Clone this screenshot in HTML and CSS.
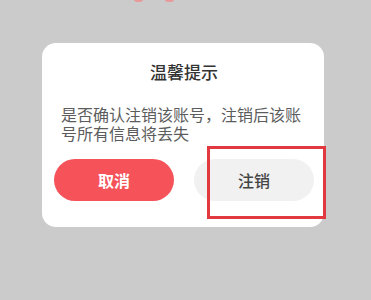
FILE: index.html
```html
<!DOCTYPE html>
<html lang="zh">
<head>
<meta charset="utf-8">
<link rel="stylesheet" href="styles.css">
</head>
<body>
<div class="screen">
  <div class="top-marks"><span class="mark"></span><span class="mark"></span></div>
  <div class="dialog">
    <div class="title">温馨提示</div>
    <div class="message">是否确认注销该账号，注销后该账号所有信息将丢失</div>
    <div class="actions">
      <div class="btn btn-cancel">取消</div>
      <div class="btn btn-confirm">注销</div>
    </div>
  </div>
  <div class="highlight"></div>
</div>
</body>
</html>
```
FILE: styles.css
```css
html, body {
  margin: 0;
  padding: 0;
  background: #cbcbcb;
}
.screen {
  position: relative;
  width: 371px;
  height: 300px;
  overflow: hidden;
  font-family: "Noto Sans CJK SC", "Noto Sans", sans-serif;
}
.top-marks {
  position: absolute;
  left: 134px;
  top: -3px;
  display: flex;
  gap: 22px;
}
.mark {
  width: 9px;
  height: 5px;
  border-radius: 50%;
  background: #f08c8c;
  opacity: 0.8;
}
.dialog {
  position: absolute;
  left: 42px;
  top: 43px;
  width: 282px;
  height: 184px;
  box-sizing: border-box;
  background: #fff;
  border-radius: 14px;
  padding: 17px 10px 0 12px;
  display: flex;
  flex-direction: column;
}
.title {
  text-align: center;
  font-size: 17px;
  line-height: 24px;
  color: #333;
  font-weight: 500;
}
.message {
  margin-top: 21px;
  padding: 0 7px;
  font-size: 16px;
  line-height: 19px;
  color: #5c5c5c;
  font-weight: 400;
}
.actions {
  margin-top: 16px;
  display: flex;
  gap: 20px;
}
.btn {
  width: 120px;
  height: 42px;
  border-radius: 21px;
  display: flex;
  align-items: center;
  justify-content: center;
  font-size: 16px;
}
.btn-cancel {
  background: #f5525a;
  color: #fff;
  font-weight: 700;
}
.btn-confirm {
  background: #f1f1f1;
  color: #444;
  font-weight: 500;
}
.highlight {
  position: absolute;
  left: 207px;
  top: 146px;
  width: 119px;
  height: 73px;
  box-sizing: border-box;
  border: 3px solid #e2383f;
}
```
